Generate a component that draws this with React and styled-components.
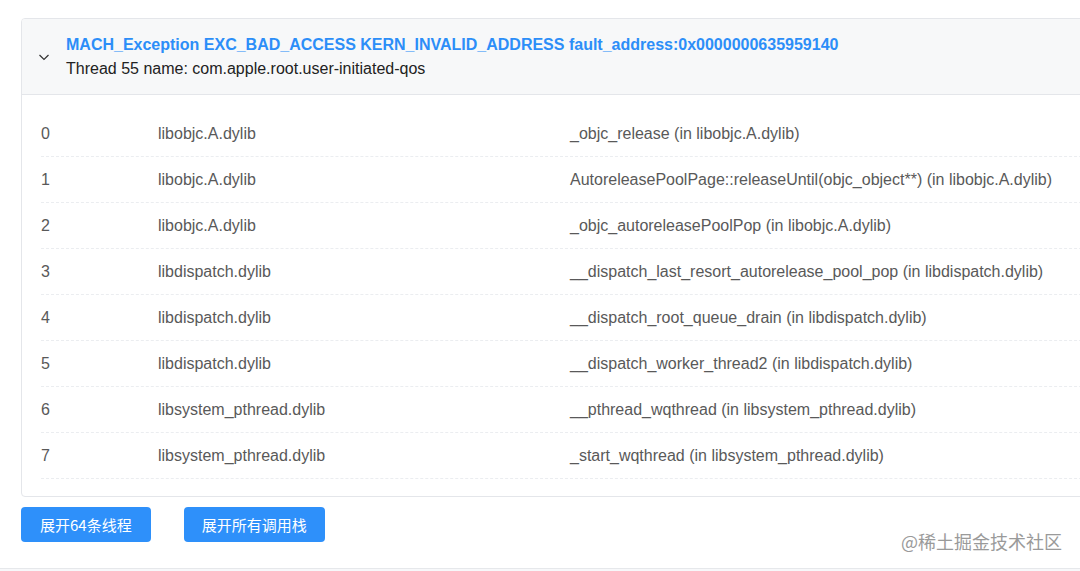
import React from "react"
import styled, { createGlobalStyle } from "styled-components"

const GlobalStyle = createGlobalStyle`
  html, body {
    margin: 0;
    padding: 0;
    background: #fff;
    overflow: hidden;
  }
  body {
    font-family: "Liberation Sans", Arial, "Noto Sans CJK SC", sans-serif;
  }
`

const StyledPage = styled.div`
  width: 1080px;
  height: 571px;
  display: flex;
  flex-direction: column;
  padding: 18px 0 0 21px;
  box-sizing: border-box;
`
const StyledCard = styled.section`
  width: 1100px;
  border: 1px solid #e4e6ea;
  border-radius: 4px;
  background: #fff;
  overflow: hidden;
`
const StyledHeader = styled.header`
  display: flex;
  align-items: center;
  height: 76px;
  background: #f7f8f9;
  border-bottom: 1px solid #e4e6ea;
  box-sizing: border-box;
`
const StyledChevron = styled.span`
  width: 44px;
  display: flex;
  justify-content: center;
  color: #333;
`
const StyledHeaderText = styled.div`
  display: flex;
  flex-direction: column;
  gap: 5px;
`
const StyledTitle = styled.div`
  font-size: 16px;
  font-weight: 700;
  color: #2c8ef8;
  line-height: 19px;
`
const StyledSubtitle = styled.div`
  font-size: 16px;
  color: #222;
  line-height: 19px;
`

const StyledBody = styled.div`
  padding: 16px 0 17px 19px;
`
const StyledRow = styled.div`
  display: grid;
  grid-template-columns: 117px 412px 1fr;
  align-items: center;
  height: 46px;
  border-bottom: 1px dashed #ebedf0;
  box-sizing: border-box;
  font-size: 16px;
  color: #595959;
`

const StyledActions = styled.div`
  display: flex;
  align-items: flex-start;
  gap: 33px;
  padding-top: 10px;
  height: 71px;
  box-sizing: border-box;
`
const StyledButton = styled.button`
  height: 35px;
  padding: 0 ${props => props.$pad}px;
  border: none;
  border-radius: 4px;
  background: #2e90fa;
  color: #fff;
  font-family: "Noto Sans CJK SC", sans-serif;
  font-size: 15px;
  cursor: pointer;
`
const StyledWatermark = styled.span`
  margin-left: auto;
  margin-top: 21px;
  margin-right: 18px;
  font-family: "Noto Sans CJK SC", sans-serif;
  font-size: 18px;
  color: #9a9a9a;
`
const StyledFooter = styled.div`
  margin-left: -21px;
  flex: 1;
  border-top: 1px solid #e6e8eb;
  background: #f7f8fa;
`

const frames = [
  ["libobjc.A.dylib", "_objc_release (in libobjc.A.dylib)"],
  ["libobjc.A.dylib", "AutoreleasePoolPage::releaseUntil(objc_object**) (in libobjc.A.dylib)"],
  ["libobjc.A.dylib", "_objc_autoreleasePoolPop (in libobjc.A.dylib)"],
  ["libdispatch.dylib", "__dispatch_last_resort_autorelease_pool_pop (in libdispatch.dylib)"],
  ["libdispatch.dylib", "__dispatch_root_queue_drain (in libdispatch.dylib)"],
  ["libdispatch.dylib", "__dispatch_worker_thread2 (in libdispatch.dylib)"],
  ["libsystem_pthread.dylib", "__pthread_wqthread (in libsystem_pthread.dylib)"],
  ["libsystem_pthread.dylib", "_start_wqthread (in libsystem_pthread.dylib)"],
]

export default function App() {
  return (
    <>
      <GlobalStyle />
      <StyledPage>
        <StyledCard>
          <StyledHeader>
            <StyledChevron>
              <svg width="12" height="12" viewBox="0 0 12 12" fill="none">
                <path d="M1.5 4l4.5 4.5L10.5 4" stroke="currentColor" strokeWidth="1.2" />
              </svg>
            </StyledChevron>
            <StyledHeaderText>
              <StyledTitle>
                MACH_Exception EXC_BAD_ACCESS KERN_INVALID_ADDRESS fault_address:0x0000000635959140
              </StyledTitle>
              <StyledSubtitle>Thread 55 name: com.apple.root.user-initiated-qos</StyledSubtitle>
            </StyledHeaderText>
          </StyledHeader>
          <StyledBody>
            {frames.map(([lib, symbol], i) => (
              <StyledRow key={i}>
                <span>{i}</span>
                <span>{lib}</span>
                <span>{symbol}</span>
              </StyledRow>
            ))}
          </StyledBody>
        </StyledCard>
        <StyledActions>
          <StyledButton $pad={19}>展开64条线程</StyledButton>
          <StyledButton $pad={18}>展开所有调用栈</StyledButton>
          <StyledWatermark>@稀土掘金技术社区</StyledWatermark>
        </StyledActions>
        <StyledFooter />
      </StyledPage>
    </>
  )
}
